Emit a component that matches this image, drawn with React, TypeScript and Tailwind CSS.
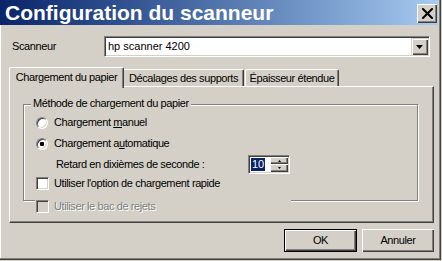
import React from "react";

function Radio({ checked }: { checked?: boolean }) {
  return (
    <div className="w-[12px] h-[12px] rounded-full border border-t-[#808080] border-l-[#808080] border-r-white border-b-white bg-white shadow-[inset_1px_1px_0_#404040,inset_-1px_-1px_0_#D4D0C8] flex items-center justify-center shrink-0">
      {checked ? <div className="w-[4px] h-[4px] rounded-[1px] bg-black" /> : null}
    </div>
  );
}

function Check({ disabled }: { disabled?: boolean }) {
  return (
    <div
      className={
        disabled
          ? "w-[13px] h-[13px] shrink-0 border border-t-[#808080] border-l-[#808080] border-r-white border-b-white bg-[#D4D0C8] shadow-[inset_1px_1px_0_#404040,inset_-1px_-1px_0_#D4D0C8]"
          : "w-[13px] h-[13px] shrink-0 border border-t-[#808080] border-l-[#808080] border-r-white border-b-white bg-white shadow-[inset_1px_1px_0_#404040,inset_-1px_-1px_0_#D4D0C8]"
      }
    />
  );
}

export default function App() {
  return (
    <div className="w-[442px] h-[261px] bg-[#D4D0C8]">
      <div className="w-[441px] h-[260px] bg-[#D4D0C8] flex flex-col shadow-[inset_-1px_-1px_0_#404040,inset_-2px_-2px_0_#808080,inset_1px_0_0_#fff] font-['Liberation_Sans',Arial,sans-serif] text-black text-[11px] tracking-[-0.4px] overflow-hidden">
        {/* Title bar */}
        <div className="w-[438px] h-[25px] shrink-0 bg-gradient-to-r from-[#0A246A] to-[#A6CAF0] flex items-start justify-between">
          <div className="pl-[5px] text-[21px] leading-[25px] font-bold text-white tracking-normal whitespace-nowrap">
            Configuration du scanneur
          </div>
          <div className="mt-[4px] mr-[1px] w-[20px] h-[19px] bg-[#D4D0C8] shadow-[inset_1px_1px_0_#fff,inset_-1px_-1px_0_#404040,inset_-2px_-2px_0_#808080] flex items-center justify-center">
            <svg width="11" height="11" viewBox="0 0 11 11" className="mb-[1px]">
              <path d="M1 1 L10 10 M10 1 L1 10" stroke="#000" strokeWidth="2" strokeLinecap="square" />
            </svg>
          </div>
        </div>

        {/* Scanner row */}
        <div className="mt-[11px] pl-[12px] flex items-center">
          <div className="w-[92px]">Scanneur</div>
          <div className="w-[326px] h-[21px] border border-t-[#808080] border-l-[#808080] border-r-white border-b-white bg-white shadow-[inset_1px_1px_0_#404040,inset_-1px_-1px_0_#D4D0C8] p-[1px] flex items-center">
            <div className="flex-1 pl-[2px] text-[11px] tracking-normal whitespace-nowrap">hp scanner 4200</div>
            <div className="w-[17px] h-[17px] bg-[#D4D0C8] shadow-[inset_1px_1px_0_#D4D0C8,inset_2px_2px_0_#fff,inset_-1px_-1px_0_#404040,inset_-2px_-2px_0_#808080] flex items-center justify-center">
              <svg width="7" height="4" viewBox="0 0 7 4">
                <path d="M0 0 H7 L3.5 4 Z" fill="#000" />
              </svg>
            </div>
          </div>
        </div>

        {/* Tabs */}
        <div className="mt-[10px] ml-[9px] h-[19px] flex items-start relative z-10">
          <div className="w-[115px] h-[21px] pb-[2px] bg-[#D4D0C8] border-l border-t border-l-white border-t-white border-r border-r-[#404040] shadow-[inset_-1px_0_0_#808080] rounded-tl-[2px] rounded-tr-[2px] flex items-center justify-center whitespace-nowrap">
            Chargement du papier
          </div>
          <div className="mt-[2px] w-[120px] h-[17px] border-t border-t-white border-r border-r-[#404040] shadow-[inset_-1px_0_0_#808080] rounded-tr-[2px] flex items-center justify-center whitespace-nowrap">
            Décalages des supports
          </div>
          <div className="mt-[2px] ml-[1px] w-[94px] h-[17px] border-l border-l-white border-t border-t-white border-r border-r-[#404040] shadow-[inset_-1px_0_0_#808080] rounded-tl-[2px] rounded-tr-[2px] flex items-center justify-center whitespace-nowrap">
            Épaisseur étendue
          </div>
        </div>

        {/* Panel */}
        <div className="ml-[9px] w-[425px] h-[137px] shrink-0 border border-l-white border-t-white border-r-[#404040] border-b-[#404040] shadow-[inset_-1px_-1px_0_#808080] flex flex-col">
          <div className="ml-[13px] mt-[17px] w-[395px] h-[97px] shrink-0 relative border border-[#808080] shadow-[1px_1px_0_#fff,inset_1px_1px_0_#fff] flex flex-col">
            <div className="absolute left-[7px] top-[-8px] px-[2px] bg-[#D4D0C8] leading-[13px] whitespace-nowrap">
              Méthode de chargement du papier
            </div>
            <div className="mt-[11px] ml-[12px] h-[13px] flex items-center">
              <Radio />
              <div className="ml-[6px] whitespace-nowrap">
                Chargement <span className="underline">m</span>anuel
              </div>
            </div>
            <div className="mt-[8px] ml-[12px] h-[13px] flex items-center">
              <Radio checked />
              <div className="ml-[6px] whitespace-nowrap">
                Chargement a<span className="underline">u</span>tomatique
              </div>
            </div>
            <div className="mt-[5px] ml-[32px] h-[19px] flex items-center">
              <div className="w-[192px] whitespace-nowrap">Retard en dixièmes de seconde :</div>
              <div className="w-[42px] h-[19px] border border-t-[#808080] border-l-[#808080] border-r-white border-b-white bg-white shadow-[inset_1px_1px_0_#404040,inset_-1px_-1px_0_#D4D0C8] p-[1px] flex items-center">
                <div className="flex-1 flex items-center pl-[1px]">
                  <span className="bg-[#0A246A] text-white leading-[13px] px-[1px] tracking-normal">10</span>
                </div>
                <div className="w-[18px] h-[15px] flex flex-col">
                  <div className="h-[7px] bg-[#D4D0C8] shadow-[inset_1px_1px_0_#fff,inset_-1px_-1px_0_#404040,inset_-2px_-2px_0_#808080] flex items-center justify-center">
                    <svg width="3" height="2" viewBox="0 0 3 2">
                      <path d="M1.5 0 L3 2 H0 Z" fill="#000" />
                    </svg>
                  </div>
                  <div className="h-[8px] bg-[#D4D0C8] shadow-[inset_1px_1px_0_#fff,inset_-1px_-1px_0_#404040,inset_-2px_-2px_0_#808080] flex items-center justify-center">
                    <svg width="3" height="2" viewBox="0 0 3 2">
                      <path d="M0 0 H3 L1.5 2 Z" fill="#000" />
                    </svg>
                  </div>
                </div>
              </div>
            </div>
            <div className="mt-[3px] ml-[12px] h-[13px] flex items-center">
              <Check />
              <div className="ml-[5px] whitespace-nowrap">Utiliser l'option de chargement rapide</div>
            </div>
          </div>
          <div className="mt-[-1px] ml-[25px] w-[256px] h-[14px] relative z-10 bg-[#D4D0C8] flex items-start">
            <div className="ml-[1px]">
              <Check disabled />
            </div>
            <div className="ml-[5px] leading-[13px] text-[#808080] [text-shadow:1px_1px_0_#fff] whitespace-nowrap">
              Utiliser le bac de rejets
            </div>
          </div>
        </div>

        {/* Buttons */}
        <div className="mt-[6px] ml-[284px] flex gap-[5px]">
          <div className="w-[73px] h-[23px] border border-black bg-[#D4D0C8] shadow-[inset_1px_1px_0_#fff,inset_-1px_-1px_0_#404040,inset_-2px_-2px_0_#808080] flex items-center justify-center">
            OK
          </div>
          <div className="w-[72px] h-[23px] bg-[#D4D0C8] shadow-[inset_1px_1px_0_#fff,inset_-1px_-1px_0_#404040,inset_-2px_-2px_0_#808080] flex items-center justify-center">
            Annuler
          </div>
        </div>
      </div>
    </div>
  );
}
